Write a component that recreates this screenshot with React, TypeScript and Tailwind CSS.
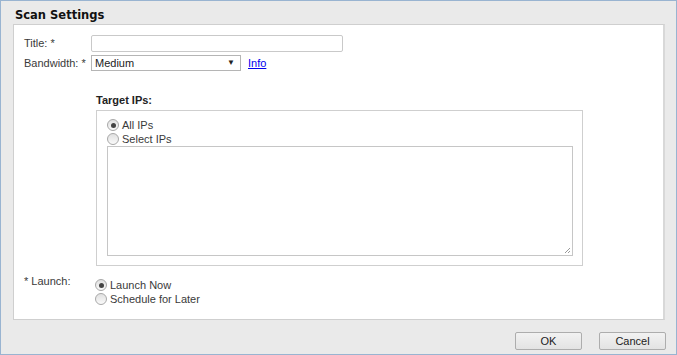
import React from "react";

function Radio({ checked, label }: { checked?: boolean; label: string }) {
  return (
    <label className="flex items-center gap-[3px] h-[14px]">
      <span className="w-[12px] h-[12px] rounded-full border border-[#a8a8a8] bg-gradient-to-b from-[#e0e0e0] to-[#fafafa] flex items-center justify-center">
        {checked && <span className="w-[5px] h-[5px] rounded-full bg-[#444]" />}
      </span>
      <span>{label}</span>
    </label>
  );
}

function Button({ children }: { children: React.ReactNode }) {
  return (
    <button className="w-[67px] h-[18px] border border-[#adadad] rounded-[2px] bg-gradient-to-b from-[#f2f2f2] to-[#e3e3e3] text-[11px] text-[#222] leading-none">
      {children}
    </button>
  );
}

export default function App() {
  return (
    <div
      className="w-[677px] h-[355px] border border-[#99b4d1] bg-[#eaeaea] text-[11px] text-[#3a3a3a]"
      style={{ fontFamily: '"Liberation Sans", Arial, sans-serif' }}
    >
      <div className="pl-[14px] pt-[6px] h-[23px] text-[11.5px] font-bold text-[#111]" style={{ fontFamily: '"DejaVu Sans", Tahoma, sans-serif' }}>
        Scan Settings
      </div>
      <div className="ml-[12px] w-[652px] h-[296px] bg-white border border-[#cfcfcf] border-r-[#d8d8d8] border-r-2 pl-[10px] pt-[10px]">
        <div className="flex items-center h-[17px]">
          <div className="w-[67px]">Title: *</div>
          <input className="w-[252px] h-[17px] border border-[#c9c9c9] rounded-[2px] outline-none" />
        </div>
        <div className="flex items-center h-[16px] mt-[3px]">
          <div className="w-[67px]">Bandwidth: *</div>
          <div className="w-[150px] h-[16px] border border-[#b5b5b5] flex items-center justify-between px-[3px] text-[#222]">
            <span>Medium</span>
            <span className="text-[8px] mr-[2px]">▼</span>
          </div>
          <a className="ml-[7px] text-[#0000ee] underline">Info</a>
        </div>
        <div className="ml-[72px] mt-[22px]">
          <div className="font-bold text-[#222] h-[15px] leading-[15px]">Target IPs:</div>
          <div className="mt-[2px] w-[487px] h-[156px] border border-[#cfcfcf] pl-[10px] pt-[7px]">
            <Radio checked label="All IPs" />
            <Radio label="Select IPs" />
            <div className="relative w-[466px] h-[110px] border border-[#c6c6c6]">
              <svg className="absolute right-[1px] bottom-[1px]" width="8" height="8" viewBox="0 0 8 8">
                <path d="M7 2 L2 7 M7 5 L5 7" stroke="#999" strokeWidth="1" />
              </svg>
            </div>
          </div>
        </div>
        <div className="flex mt-[8px]">
          <div className="w-[71px] leading-[14px]">* Launch:</div>
          <div className="pt-[4px]">
            <Radio checked label="Launch Now" />
            <Radio label="Schedule for Later" />
          </div>
        </div>
      </div>
      <div className="flex justify-end gap-[17px] mr-[10px] mt-[12px]">
        <Button>OK</Button>
        <Button>Cancel</Button>
      </div>
    </div>
  );
}
